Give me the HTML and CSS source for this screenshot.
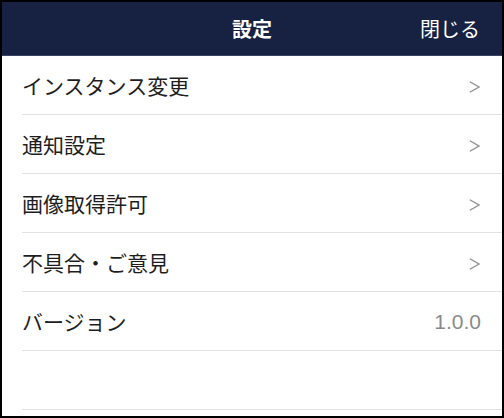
FILE: index.html
```html
<!DOCTYPE html>
<html lang="ja">
<head>
<meta charset="utf-8">
<title>設定</title>
<link rel="stylesheet" href="styles.css">
</head>
<body>
<div class="screen">
  <header class="navbar">
    <span class="nav-spacer"></span>
    <h1 class="nav-title">設定</h1>
    <span class="nav-close">閉じる</span>
  </header>
  <ul class="menu">
    <li class="menu-row"><span class="menu-label">インスタンス変更</span><svg class="chevron" width="11" height="12" viewBox="0 0 11 12"><polyline points="0.8,0.8 10,6 0.8,11.2" fill="none" stroke="#8e8e93" stroke-width="1.3"/></svg></li>
    <li class="menu-row"><span class="menu-label">通知設定</span><svg class="chevron" width="11" height="12" viewBox="0 0 11 12"><polyline points="0.8,0.8 10,6 0.8,11.2" fill="none" stroke="#8e8e93" stroke-width="1.3"/></svg></li>
    <li class="menu-row"><span class="menu-label">画像取得許可</span><svg class="chevron" width="11" height="12" viewBox="0 0 11 12"><polyline points="0.8,0.8 10,6 0.8,11.2" fill="none" stroke="#8e8e93" stroke-width="1.3"/></svg></li>
    <li class="menu-row"><span class="menu-label">不具合・ご意見</span><svg class="chevron" width="11" height="12" viewBox="0 0 11 12"><polyline points="0.8,0.8 10,6 0.8,11.2" fill="none" stroke="#8e8e93" stroke-width="1.3"/></svg></li>
    <li class="menu-row"><span class="menu-label">バージョン</span><span class="menu-value">1.0.0</span></li>
    <li class="menu-row menu-row-empty"></li>
  </ul>
</div>
</body>
</html>
```
FILE: styles.css
```css
* { box-sizing: border-box; }
html, body { margin: 0; padding: 0; background: #000; }
.screen {
  width: 504px;
  height: 418px;
  border: 2px solid #000;
  background: #fff;
  font-family: "Noto Sans CJK JP", "Noto Sans", sans-serif;
  overflow: hidden;
}
.navbar {
  height: 54px;
  background: #172142;
  border-bottom: 1px solid #3a4563;
  display: grid;
  grid-template-columns: 1fr auto 1fr;
  align-items: center;
  padding: 0 22px 0 22px;
  color: #fff;
}
.nav-title {
  margin: 0;
  font-size: 20px;
  font-weight: 700;
  line-height: 1;
}
.nav-close {
  justify-self: end;
  font-size: 20px;
  line-height: 1;
}
.menu {
  list-style: none;
  margin: 0;
  padding: 0;
}
.menu-row {
  margin-left: 20px;
  height: 59px;
  border-bottom: 1px solid #e2e2e2;
  display: flex;
  align-items: center;
  justify-content: space-between;
  padding: 1px 22px 0 0;
}
.menu-label {
  font-size: 21px;
  color: #1e1e1e;
  line-height: 1;
}
.chevron { display: block; margin-top: 2px; }
.menu-value {
  font-family: "Liberation Sans", sans-serif;
  font-size: 21px;
  color: #8a8a8a;
  line-height: 1;
  margin-right: -1px;
}
```
